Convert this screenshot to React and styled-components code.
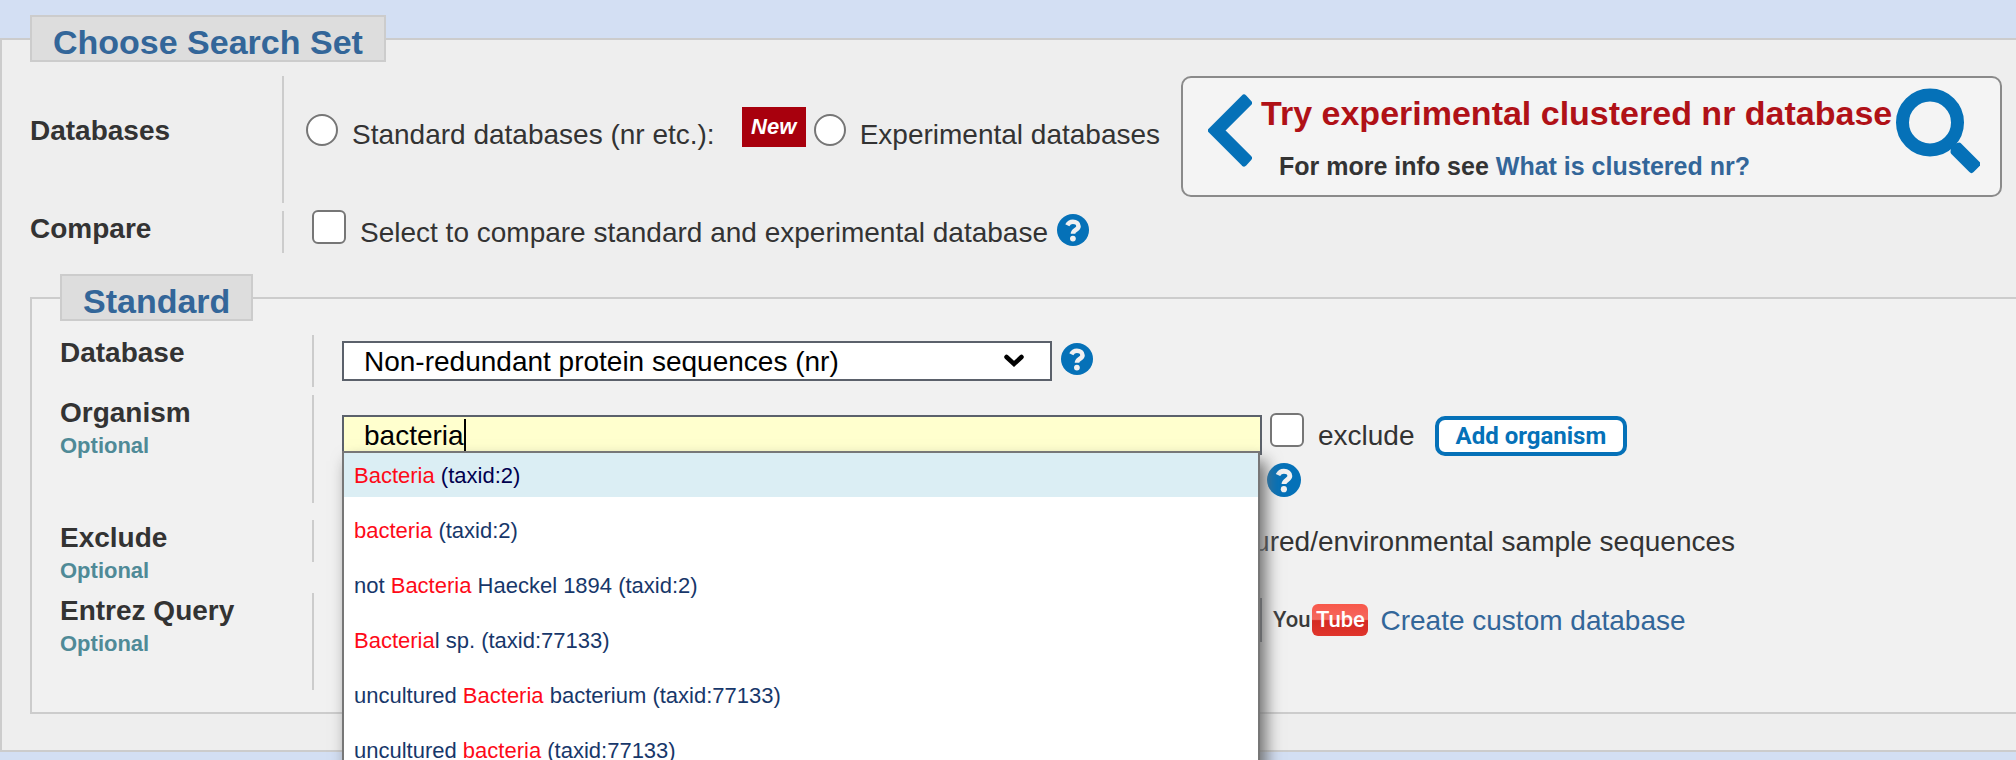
import React, { useState } from "react";
import styled, { createGlobalStyle, css } from "styled-components";

const GlobalStyle = createGlobalStyle`
  * { box-sizing: border-box; }
  html, body { margin: 0; background: #d3dff3; overflow-x: hidden; }
  body {
    color: #333;
    font: 28px/34px "Liberation Sans", Arial, sans-serif;
  }
`;

const Page = styled.main`
  padding-top: 15px;
  height: 100vh;
  overflow: hidden;
  white-space: nowrap;
`;

const Panel = styled.fieldset`
  margin: ${(p) => (p.$nested ? "21px 0 0" : "0")};
  min-width: 0;
  border: 2px solid #ccc;
  border-right: 0;
  background: ${(p) => (p.$nested ? "#f1f1f1" : "#eee")};
  padding: 0 0 ${(p) => (p.$nested ? 22 : 36)}px 28px;
`;

const PanelTitle = styled.legend`
  height: 47px;
  padding: 5px 21px 0;
  border: 2px solid #ccc;
  background: #ddd;
  color: #369;
  font-size: 34px;
  font-weight: bold;
  line-height: 40px;
`;

const Rows = styled.div`
  display: flex;
  flex-direction: column;
  gap: 8px;
  padding-top: 14px;
`;

const Row = styled.div`
  display: grid;
  grid-template-columns: 252px minmax(0, 1fr);
  align-items: start;
  padding-bottom: ${(p) => (p.$spaced ? 9 : 0)}px;
`;

const RowTitle = styled.div`
  padding-top: ${(p) => (p.$lowered ? 38 : 1)}px;
  font-weight: bold;
`;

const Optional = styled.div`
  height: 30px;
  color: #4f8a97;
  font-size: 22px;
  line-height: 32px;
`;

const Controls = styled.div`
  display: flex;
  align-items: ${(p) => p.$align || "center"};
  min-height: ${(p) => p.$height}px;
  padding-left: ${(p) => p.$indent || 28}px;
  border-left: 2px solid #ccc;
`;

const Choices = styled.div`
  display: flex;
  align-items: center;
  height: 116px;
`;

const Choice = styled.label`
  display: flex;
  align-items: center;
  gap: 14px;
  height: 42px;
  padding-top: 2px;
`;

const Tick = styled.input.attrs({ type: "checkbox" })`
  appearance: none;
  flex: none;
  width: 34px;
  height: 34px;
  margin: 0 0 12px;
  border: 2px solid #767676;
  border-radius: 6px;
  background: #fff;
  &:checked { background: #0571b8; }
`;

const Radio = styled.input.attrs({ type: "radio" })`
  appearance: none;
  flex: none;
  width: 32px;
  height: 32px;
  margin: 0 0 10px;
  border: 2px solid #767676;
  border-radius: 50%;
  background: #fff;
  &:checked { box-shadow: inset 0 0 0 6px #fff; background: #0571b8; }
`;

const NewBadge = styled.span`
  width: 64px;
  height: 40px;
  margin: 0 8px 14px 27px;
  background: #a8000d;
  color: #fff;
  font-size: 22px;
  font-weight: bold;
  font-style: italic;
  line-height: 40px;
  text-align: center;
`;

const Banner = styled.aside`
  display: flex;
  flex: 1;
  justify-content: space-between;
  min-width: 0;
  height: 121px;
  margin: 0 14px 0 21px;
  padding: 10px 20px 0 25px;
  border: 2px solid #8a8a8a;
  border-radius: 10px;
  background: #f4f4f4;
  font-weight: bold;
  svg { flex: none; }
`;

const BannerText = styled.div`
  flex: 1;
  min-width: 0;
  padding-left: 9px;
`;

const BannerTitle = styled.div`
  color: #b01117;
  font-size: 34px;
  line-height: 50px;
`;

const BannerInfo = styled.div`
  padding: 4px 0 0 18px;
  font-size: 25px;
  line-height: 48px;
`;

const Link = styled.a`
  color: #369;
  text-decoration: none;
`;

const HelpButton = styled.button`
  display: block;
  flex: none;
  width: ${(p) => p.$size}px;
  height: ${(p) => p.$size}px;
  margin: ${(p) => (p.$inline ? "0 0 4px 9px" : "0")};
  padding: 0;
  border: 0;
  background: none;
  svg { display: block; width: 100%; height: 100%; }
`;

const SelectBox = styled.div`
  display: grid;
  width: 710px;
  align-items: center;
  svg { grid-area: 1 / 1; justify-self: end; margin-right: 28px; pointer-events: none; }
`;

const fieldBox = css`
  width: 100%;
  height: ${(p) => p.$height || 40}px;
  padding: 2px 20px 0;
  border: 2px solid #5b616b;
  border-radius: 0;
  color: #000;
  font: inherit;
`;

const Select = styled.select`
  ${fieldBox}
  grid-area: 1 / 1;
  appearance: none;
  background: #fff;
`;

const TextField = styled.input`
  ${fieldBox}
  display: block;
  background: ${(p) => (p.$active ? "#ffffce" : "#fff")};
  outline: none;
`;

const FieldGrid = styled.div`
  display: grid;
  grid-template-columns: 920px auto;
  column-gap: 5px;
  row-gap: 7px;
  align-items: center;
  padding-top: ${(p) => p.$top}px;
`;

const SearchField = styled.div`
  position: relative;
`;

const Caret = styled.span`
  position: absolute;
  top: 4px;
  left: 122px;
  width: 2px;
  height: 32px;
  background: #000;
  pointer-events: none;
  input:focus + & { display: none; }
`;

const Suggestions = styled.ul`
  position: absolute;
  z-index: 2;
  top: 36px;
  left: 0;
  right: 2px;
  margin: 0;
  padding: 0;
  list-style: none;
  border: 2px solid #777;
  background: #fff;
  box-shadow: 6px 10px 15px #6e6e6e;
  font-size: 22px;
`;

const Suggestion = styled.li`
  height: 44px;
  margin-bottom: 11px;
  padding: 6px 10px 0;
  background: ${(p) => (p.$current ? "#dbeef4" : "#fff")};
  color: ${(p) => (p.$current ? "#00004f" : "#17376a")};
  em { color: #fe0a18; font-style: normal; }
`;

const OrganismActions = styled.div`
  display: flex;
  align-items: center;
  padding-left: 3px;
`;

const AddButton = styled.button`
  height: 40px;
  margin: 2px 0 0 20px;
  padding: 0 17px;
  border: 4px solid #0571b8;
  border-radius: 10px;
  background: #fff;
  color: #0571b8;
  font: bold 24px/30px Roboto, sans-serif;
`;

const ExcludeChoices = styled.div`
  display: flex;
  gap: 9px;
`;

const CustomDatabase = styled.div`
  display: flex;
  align-items: center;
  gap: 12px;
  padding: 2px 0 0 6px;
`;

const YouTubeMark = styled.a`
  display: flex;
  align-items: center;
  gap: 2px;
  margin-bottom: 2px;
  color: #3a3a3a;
  font: 500 22px/32px Roboto, sans-serif;
  text-decoration: none;
  span {
    width: 56px;
    border-radius: 6px;
    background: linear-gradient(#f8584a, #f4695f 48%, #d42a22 52%, #e0352c);
    color: #fff;
    text-align: center;
  }
`;

function HelpIcon({ size = 32, inline }) {
  return (
    <HelpButton type="button" aria-label="Help" $size={size} $inline={inline}>
      <svg viewBox="0 0 32 32">
        <circle cx="16" cy="16" r="16" fill="#0571b8" />
        <path d="M10.300 11.300C11.500 8.900 13.300 7.700 15.900 7.700c3.300 0 5.600 1.900 5.600 4.500 0 3.700-5.500 3.800-5.500 7.600" fill="none" stroke="#f1f1f1" strokeWidth="4.600" />
        <circle cx="15.900" cy="24.600" r="2.900" fill="#f1f1f1" />
      </svg>
    </HelpButton>
  );
}

const suggestions = [
  ["", "Bacteria", " (taxid:2)"],
  ["", "bacteria", " (taxid:2)"],
  ["not ", "Bacteria", " Haeckel 1894 (taxid:2)"],
  ["", "Bacteria", "l sp. (taxid:77133)"],
  ["uncultured ", "Bacteria", " bacterium (taxid:77133)"],
  ["uncultured ", "bacteria", " (taxid:77133)"],
];

export default function App() {
  const [organism, setOrganism] = useState("bacteria");
  return (
    <Page>
      <GlobalStyle />
      <Panel>
        <PanelTitle>Choose Search Set</PanelTitle>
        <Rows>
          <Row>
            <RowTitle $lowered>Databases</RowTitle>
            <Controls $height={127} $indent={22} $align="flex-start">
              <Choices>
                <Choice><Radio name="dbs" />Standard databases (nr etc.):</Choice>
                <NewBadge>New</NewBadge>
                <Choice><Radio name="dbs" />Experimental databases</Choice>
              </Choices>
              <Banner>
                <svg width="44" height="88" viewBox="0 0 44 88" fill="#0571b8" stroke="#0571b8" strokeWidth="6" strokeLinejoin="round">
                  <path d="M3 42.500L36 9.500L41 15L13.500 42.500L41 70L36 75.500Z" />
                </svg>
                <BannerText>
                  <BannerTitle>Try experimental clustered nr database</BannerTitle>
                  <BannerInfo>For more info see <Link href="#clustered">What is clustered nr?</Link></BannerInfo>
                </BannerText>
                <svg width="84" height="88" viewBox="0 0 84 88" fill="#0571b8" stroke="#0571b8" strokeLinejoin="round">
                  <circle cx="34" cy="34.500" r="27.500" fill="none" strokeWidth="13" />
                  <path d="M58 59L63 57.500L81.500 76L75.500 82L57.500 64Z" strokeWidth="6" />
                </svg>
              </Banner>
            </Controls>
          </Row>
          <Row>
            <RowTitle>Compare</RowTitle>
            <Controls $height={42}>
              <Choice><Tick />Select to compare standard and experimental database</Choice>
              <HelpIcon inline />
            </Controls>
          </Row>
        </Rows>
        <Panel $nested>
          <PanelTitle>Standard</PanelTitle>
          <Rows>
            <Row>
              <RowTitle><label htmlFor="database">Database</label></RowTitle>
              <Controls $height={52}>
                <SelectBox>
                  <Select id="database"><option>Non-redundant protein sequences (nr)</option></Select>
                  <svg width="20" height="14" viewBox="0 0 20 14">
                    <path d="M2.500 3L10 10L17.500 3" fill="none" stroke="#000" strokeWidth="4.500" strokeLinecap="round" />
                  </svg>
                </SelectBox>
                <HelpIcon inline />
              </Controls>
            </Row>
            <Row $spaced>
              <RowTitle><label htmlFor="organism">Organism</label><Optional>Optional</Optional></RowTitle>
              <Controls $height={108} $align="flex-start">
                <FieldGrid $top={19}>
                  <SearchField>
                    <TextField id="organism" $active value={organism} onChange={(e) => setOrganism(e.target.value)} />
                    <Caret />
                    <Suggestions>
                      {suggestions.map(([before, match, after], i) => (
                        <Suggestion key={i} $current={i === 0}>{before}<em>{match}</em>{after}</Suggestion>
                      ))}
                    </Suggestions>
                  </SearchField>
                  <OrganismActions>
                    <Choice><Tick />exclude</Choice>
                    <AddButton type="button">Add organism</AddButton>
                  </OrganismActions>
                  <span />
                  <HelpIcon size={34} />
                </FieldGrid>
              </Controls>
            </Row>
            <Row>
              <RowTitle>Exclude<Optional>Optional</Optional></RowTitle>
              <Controls $height={42}>
                <ExcludeChoices>
                  <Choice><Tick />Models (XM/XP)</Choice>
                  <Choice><Tick />Non-redundant RefSeq proteins (WP)</Choice>
                  <Choice><Tick />Uncultured/environmental sample sequences</Choice>
                </ExcludeChoices>
              </Controls>
            </Row>
            <Row>
              <RowTitle><label htmlFor="entrez">Entrez Query</label><Optional>Optional</Optional></RowTitle>
              <Controls $height={97} $align="flex-start">
                <FieldGrid $top={5}>
                  <TextField id="entrez" $height={44} />
                  <CustomDatabase>
                    <YouTubeMark href="#youtube">You<span>Tube</span></YouTubeMark>
                    <Link href="#custom">Create custom database</Link>
                  </CustomDatabase>
                </FieldGrid>
              </Controls>
            </Row>
          </Rows>
        </Panel>
      </Panel>
    </Page>
  );
}
